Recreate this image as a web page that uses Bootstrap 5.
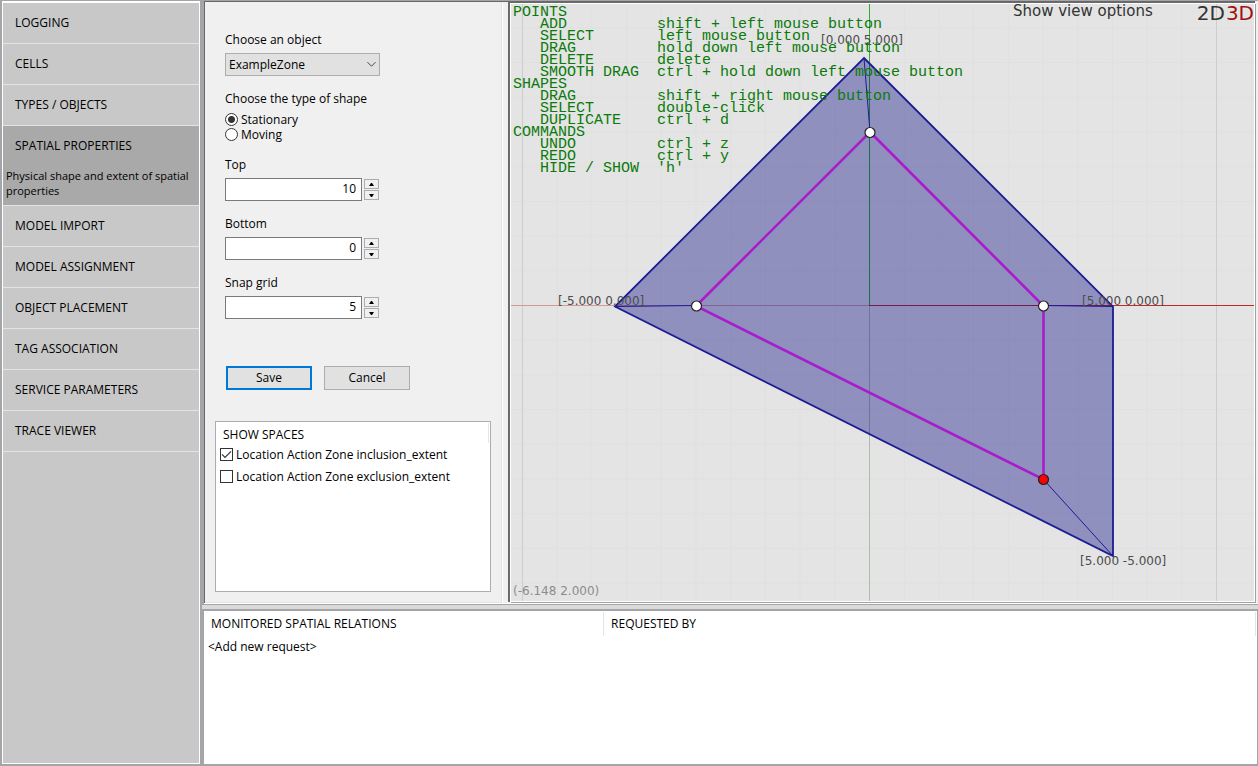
<!DOCTYPE html>
<html lang="en">
<head>
<meta charset="utf-8">
<meta name="viewport" content="width=device-width, initial-scale=1">
<title>Spatial properties</title>
<link href="https://cdn.jsdelivr.net/npm/bootstrap@5.3.0/dist/css/bootstrap.min.css" rel="stylesheet">
<style>
  body { font: 12px/15px "Open Sans", "Noto Sans", sans-serif; color: #000; background: #a5a5a9; }
  .app { min-height: 100vh; padding: 1px 0 2px 2px; gap: 4px; }
  .side { width: 198px; background: #c8c8c8; border: 1px solid #fff; border-top-width: 2px; }
  .side a { display: block; color: #000; text-decoration: none; padding: 12px 12px 13px; border-bottom: 1px solid #e3e3e3; }
  .side a span { display: block; }
  .side a.active { background: #a9a9a9; padding-bottom: 7px; }
  .side .hint { margin: 15px -9px 0; font-size: 11px; }
  .workspace { min-width: 0; }
  .form-pane { width: 304px; background: #f0f0f0; border: solid #696969; border-width: 1px 0 0 1px; padding-right: 6px; }
  .form-inner { border: solid #e3e3e3; border-width: 0 1px 1px 0; box-shadow: 1px 1px 0 #fff; height: 100%; padding: 30px 10px 10px; }
  .fields { margin-left: 10px; }
  .field { margin-bottom: 15px; border: 0; padding: 0; }
  .field > label, .field > legend { display: block; font-size: 12px; line-height: 15px; margin: 0 0 6px; }
  .pick { width: 155px; height: 23px; position: relative; }
  .pick select { appearance: none; width: 100%; height: 23px; border: 1px solid #adadad; border-radius: 0; background: #e1e1e1; padding: 0 3px; color: #000; }
  .pick svg { position: absolute; right: 4px; top: 8px; pointer-events: none; }
  .opt { display: flex; align-items: center; height: 15px; gap: 3px; }
  .opt input { appearance: none; flex: none; width: 13px; height: 13px; margin: 0; border: 1px solid #333; background: #fff; }
  .opt input[type=radio] { border-radius: 50%; }
  .opt input[type=radio]:checked { background: radial-gradient(circle, #333 3px, #fff 4px); }
  .opt input[type=checkbox]:checked { background: #fff url("data:image/svg+xml,%3Csvg xmlns='http://www.w3.org/2000/svg' viewBox='0 0 11 11'%3E%3Cpath d='M1 5.3 4 8.3 10 2.3' fill='none' stroke='%23333' stroke-width='1.2'/%3E%3C/svg%3E"); }
  .num-row { display: flex; gap: 2px; }
  .num { width: 137px; height: 23px; border: 1px solid #7a7a7a; border-radius: 0; text-align: right; padding: 0 5px 2px; color: #000; background: #fff; }
  .spin { display: flex; flex-direction: column; gap: 1px; padding: 1px 0; }
  .spin button { width: 15px; height: 10px; border: 1px solid #adadad; background: #f0f0f0; padding: 0; display: flex; align-items: center; justify-content: center; }
  .cmd { width: 86px; height: 24px; border: 1px solid #adadad; background: #e1e1e1; padding: 0 0 1px; color: #000; }
  .cmd.main { border: 2px solid #0078d7; }
  .cmds { gap: 12px; margin: 47px 0 31px 11px; }
  .spaces { min-height: 171px; border: 1px solid #abadb3; background: #fff; padding: 1px 1px 0 4px; }
  .spaces h2 { font-size: 12px; font-weight: 400; line-height: 15px; margin: 0; padding: 4px 3px 1px; border-right: 1px solid #e5e5e5; }
  .spaces .opt { height: 22px; }
  .view-pane { background: #e4e4e4; border: solid #696969; border-width: 2px 0 0 2px; min-width: 0; margin: 0 3px 1px 0; }
  .view-frame { border: 1px solid #fff; box-shadow: 1px 1px 0 #a0a0a0; height: 100%; position: relative; overflow: hidden; }
  .scene { display: block; width: 100%; height: 0; min-height: 100%; }
  .scene text { font: 12px "DejaVu Sans", sans-serif; fill: #4c4c4c; }
  .keys { position: absolute; left: 2px; top: 3px; margin: 0; overflow: visible; font: 15px/12px "Liberation Mono", monospace; color: #0a7a0a; }
  .viewopts { position: absolute; right: 0; top: 0; gap: 44px; font-family: "DejaVu Sans", sans-serif; }
  .viewopts button { border: 0; background: none; padding: 0; color: #333; }
  .viewopts .words { font-size: 15px; line-height: 15px; }
  .viewopts .dims { font-size: 20px; line-height: 19px; }
  .viewopts .dims.on { color: #a01010; }
  .dim-pair { gap: 1px; }
  .splitter { height: 7px; background: #dadada; border: solid #a5a5a9; border-width: 1px 0 2px; margin-left: -2px; }
  .upper { background: #f0f0f0; border-bottom: 1px solid #fff; }
  .lower { background: #fff; margin-right: 1px; padding: 1px 1px 0 0; }
  .lower table { width: 100%; table-layout: fixed; border-collapse: collapse; }
  .lower th { font-weight: 400; height: 24px; padding: 0 7px 1px; border-right: 1px solid #e5e5e5; }
  .lower td { padding: 3px 4px; }
  .lower .first { width: 38%; }
</style>
</head>
<body>
<div class="app d-flex">
  <nav class="side flex-shrink-0" aria-label="Sections">
    <a href="#logging">LOGGING</a>
    <a href="#cells">CELLS</a>
    <a href="#types">TYPES / OBJECTS</a>
    <a href="#spatial" class="active" aria-current="page"><span>SPATIAL PROPERTIES</span><span class="hint">Physical shape and extent of spatial properties</span></a>
    <a href="#import">MODEL IMPORT</a>
    <a href="#assign">MODEL ASSIGNMENT</a>
    <a href="#placement">OBJECT PLACEMENT</a>
    <a href="#tags">TAG ASSOCIATION</a>
    <a href="#service">SERVICE PARAMETERS</a>
    <a href="#trace">TRACE VIEWER</a>
  </nav>
  <main class="workspace flex-fill d-flex flex-column">
    <div class="upper d-flex">
      <form class="form-pane flex-shrink-0" onsubmit="return false">
        <div class="form-inner">
          <div class="fields">
            <div class="field">
              <label for="obj">Choose an object</label>
              <div class="pick">
                <select id="obj"><option>ExampleZone</option></select>
                <svg width="9" height="7" viewBox="0 0 9 7"><path d="M.5 1.2 4.5 5.2 8.5 1.2" fill="none" stroke="#444"/></svg>
              </div>
            </div>
            <fieldset class="field">
              <legend>Choose the type of shape</legend>
              <div class="opt"><input type="radio" name="kind" id="k1" checked><label for="k1">Stationary</label></div>
              <div class="opt"><input type="radio" name="kind" id="k2"><label for="k2">Moving</label></div>
            </fieldset>
            <div class="field">
              <label for="top">Top</label>
              <div class="num-row"><input class="num" id="top" type="text" value="10">
                <div class="spin"><button type="button" aria-label="Increase top"><svg width="5" height="3"><path d="M0 3 2 0H3L5 3z"/></svg></button><button type="button" aria-label="Decrease top"><svg width="5" height="3"><path d="M0 0 2 3H3L5 0z"/></svg></button></div></div>
            </div>
            <div class="field">
              <label for="bottom">Bottom</label>
              <div class="num-row"><input class="num" id="bottom" type="text" value="0">
                <div class="spin"><button type="button" aria-label="Increase bottom"><svg width="5" height="3"><path d="M0 3 2 0H3L5 3z"/></svg></button><button type="button" aria-label="Decrease bottom"><svg width="5" height="3"><path d="M0 0 2 3H3L5 0z"/></svg></button></div></div>
            </div>
            <div class="field mb-0">
              <label for="snap">Snap grid</label>
              <div class="num-row"><input class="num" id="snap" type="text" value="5">
                <div class="spin"><button type="button" aria-label="Increase snap grid"><svg width="5" height="3"><path d="M0 3 2 0H3L5 3z"/></svg></button><button type="button" aria-label="Decrease snap grid"><svg width="5" height="3"><path d="M0 0 2 3H3L5 0z"/></svg></button></div></div>
            </div>
          </div>
          <div class="cmds d-flex"><button class="cmd main" type="submit">Save</button><button class="cmd" type="button">Cancel</button></div>
          <section class="spaces">
            <h2>SHOW SPACES</h2>
            <div class="opt"><input type="checkbox" id="inc" checked><label for="inc">Location Action Zone inclusion_extent</label></div>
            <div class="opt"><input type="checkbox" id="exc"><label for="exc">Location Action Zone exclusion_extent</label></div>
          </section>
        </div>
      </form>
      <section class="view-pane flex-fill">
        <div class="view-frame">
          <svg class="scene" viewBox="511 4 743 597" preserveAspectRatio="xMidYMid slice" role="img" aria-label="Zone shape">
            <defs>
              <pattern id="grid" x="869" y="305" width="34.7" height="34.7" patternUnits="userSpaceOnUse"><path d="M.5 0V35M0 .5H35" stroke="#e0e0e0" fill="none"/></pattern>
            </defs>
            <rect x="511" y="4" width="743" height="597" fill="#e4e4e4"/>
            <rect x="511" y="4" width="743" height="597" fill="url(#grid)"/>
            <path d="M522.5 4V601M1216.5 4V601" stroke="#cdcdcd"/>
            <path d="M869.5 4V305" stroke="#2fae2f"/><path d="M869.5 306V601" stroke="#a9bda9"/>
            <path d="M511 305.500H869" stroke="#d09a9a"/><path d="M869 305.500H1254" stroke="#c22a2a"/>
            <path d="M864 58 1113 306.500V556L615 306.500Z" fill="#00007f" fill-opacity=".37" stroke="#1c1c94" stroke-width="1.8"/>
            <path d="M864 58 870 132M615 306.500 696 305.500M1113 306.500 1043.500 305.500M1113 556 1043.500 479.500" stroke="#1c1c94" fill="none"/>
            <path d="M870 132 1043.500 306V479.500L696 306Z" fill="none" stroke="#a81ccc" stroke-width="2.6"/>
            <g fill="#fff" stroke="#222" stroke-width="1.2"><circle cx="870" cy="132.500" r="5"/><circle cx="696.500" cy="306" r="5"/><circle cx="1043.500" cy="306" r="5"/><circle cx="1043.500" cy="479.500" r="5" fill="#f00"/></g>
            <text x="821" y="44">[0.000 5.000]</text>
            <text x="558" y="305">[-5.000 0.000]</text>
            <text x="1082" y="305">[5.000 0.000]</text>
            <text x="1080" y="565">[5.000 -5.000]</text>
            <text x="513" y="595" style="fill:#8c8c8c">(-6.148 2.000)</text>
          </svg>
<pre class="keys">POINTS
   ADD          shift + left mouse button
   SELECT       left mouse button
   DRAG         hold down left mouse button
   DELETE       delete
   SMOOTH DRAG  ctrl + hold down left mouse button
SHAPES
   DRAG         shift + right mouse button
   SELECT       double-click
   DUPLICATE    ctrl + d
COMMANDS
   UNDO         ctrl + z
   REDO         ctrl + y
   HIDE / SHOW  'h'</pre>
          <div class="viewopts d-flex align-items-start">
            <button type="button" class="words">Show view options</button>
            <div class="dim-pair d-flex"><button type="button" class="dims">2D</button><button type="button" class="dims on">3D</button></div>
          </div>
        </div>
      </section>
    </div>
    <div class="splitter"></div>
    <section class="lower flex-fill">
      <table>
        <thead><tr><th class="first">MONITORED SPATIAL RELATIONS</th><th>REQUESTED BY</th></tr></thead>
        <tbody><tr><td>&lt;Add new request&gt;</td><td></td></tr></tbody>
      </table>
    </section>
  </main>
</div>
<script src="https://cdn.jsdelivr.net/npm/bootstrap@5.3.0/dist/js/bootstrap.bundle.min.js"></script>
</body>
</html>
